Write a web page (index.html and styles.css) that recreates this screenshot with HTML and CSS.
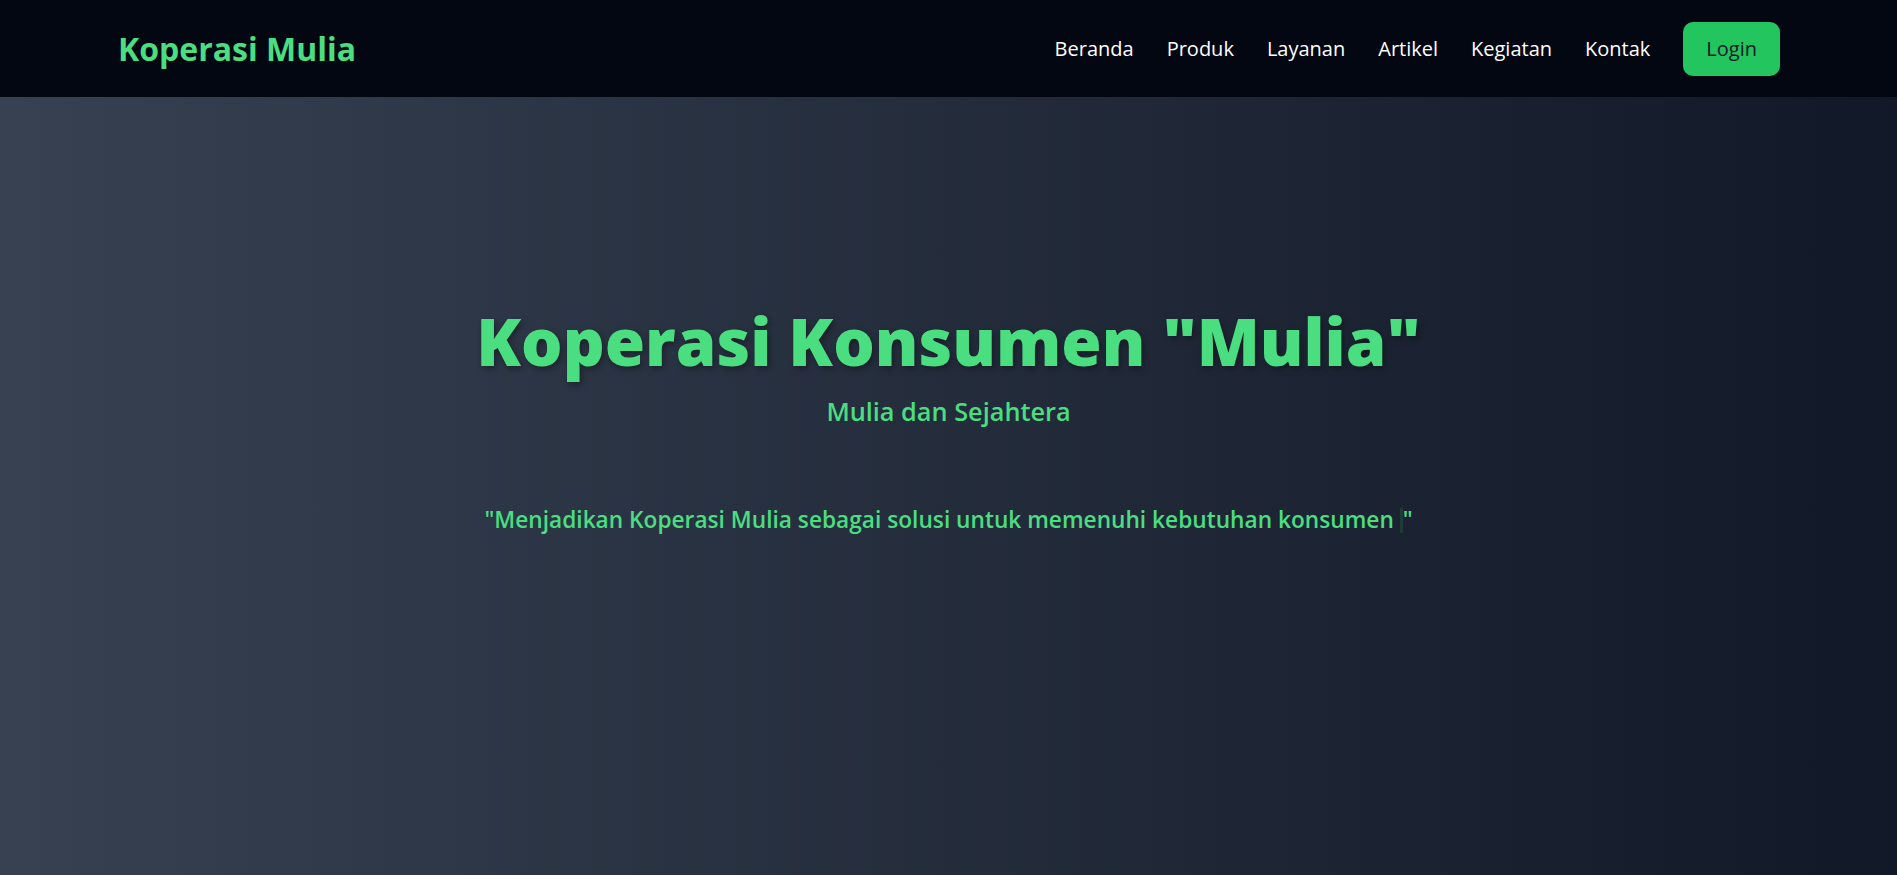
FILE: index.html
```html
<!DOCTYPE html>
<html lang="id">
<head>
<meta charset="utf-8">
<title>Koperasi Mulia</title>
<link rel="stylesheet" href="styles.css">
</head>
<body>
<header class="navbar">
  <a class="brand" href="#">Koperasi Mulia</a>
  <nav class="nav">
    <a href="#" class="nav-link">Beranda</a>
    <a href="#" class="nav-link">Produk</a>
    <a href="#" class="nav-link">Layanan</a>
    <a href="#" class="nav-link">Artikel</a>
    <a href="#" class="nav-link">Kegiatan</a>
    <a href="#" class="nav-link">Kontak</a>
    <a href="#" class="login">Login</a>
  </nav>
</header>
<main class="hero">
  <h1 class="hero-title">Koperasi Konsumen "Mulia"</h1>
  <p class="hero-sub">Mulia dan Sejahtera</p>
  <p class="hero-quote">"Menjadikan Koperasi Mulia sebagai solusi untuk memenuhi kebutuhan konsumen <span class="caret"></span>"</p>
</main>
</body>
</html>
```

FILE: styles.css
```css
* { box-sizing: border-box; }
html, body { margin: 0; padding: 0; }
body {
  font-family: "Open Sans", "Noto Sans", sans-serif;
  background: #111827;
  height: 875px;
  display: flex;
  flex-direction: column;
}
a { text-decoration: none; }
.navbar {
  height: 97px;
  flex: 0 0 auto;
  background: #030712;
  display: flex;
  align-items: center;
  justify-content: space-between;
  padding: 0 117px 0 118px;
}
.brand {
  color: #4ade80;
  font-size: 32px;
  font-weight: 700;
}
.nav {
  display: flex;
  align-items: center;
  gap: 33px;
}
.nav-link {
  color: #ffffff;
  font-size: 20px;
}
.login {
  background: #22c55e;
  color: #111827;
  font-size: 20px;
  font-weight: 500;
  height: 54px;
  padding: 0 23px;
  display: flex;
  align-items: center;
  border-radius: 10px;
}
.hero {
  flex: 1 1 auto;
  background: linear-gradient(to right, #374151, #111827);
  display: flex;
  flex-direction: column;
  align-items: center;
  padding-top: 205px;
  text-align: center;
}
.hero-title {
  margin: 0;
  color: #4ade80;
  font-size: 65.3px;
  font-weight: 800;
  line-height: 1.2;
  text-shadow: 2px 3px 6px rgba(0, 0, 0, 0.35);
}
.hero-sub {
  margin: 14px 0 0;
  color: #4ade80;
  font-size: 25.3px;
  font-weight: 600;
}
.hero-quote {
  margin: 76px 0 0;
  color: #4ade80;
  font-size: 22.7px;
  font-weight: 600;
}
.caret {
  display: inline-block;
  width: 3px;
  height: 25px;
  vertical-align: -5px;
  background: #1f3b34;
}
```
